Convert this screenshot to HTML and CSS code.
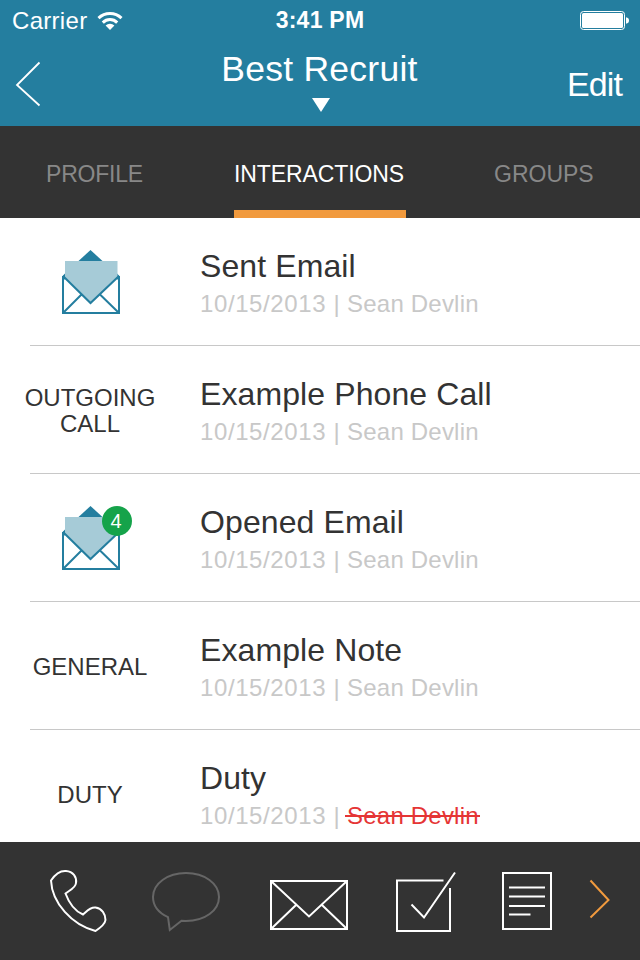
FILE: index.html
```html
<!DOCTYPE html>
<html lang="en">
<head>
<meta charset="utf-8">
<title>Best Recruit</title>
<link rel="stylesheet" href="styles.css">
</head>
<body>
<svg class="defs" width="0" height="0" aria-hidden="true">
  <symbol id="open-mail" viewBox="0 0 60 66">
    <path d="M29.500 1 41.500 12H17.500z" fill="#247e9f"/>
    <path d="M1 27.500 4 24.500V31zM59 27.500 56 24.500V31z" fill="#247e9f"/>
    <path d="M4 12H56.500V29L29.500 54 4 29z" fill="#a6cbd7"/>
    <path d="M2 27V64H58V27M2 27 29.500 54 58 27M2 64 20.500 45.500M58 64 39 45.500" fill="none" stroke="#247e9f" stroke-width="2"/>
  </symbol>
</svg>
<div class="screen">
  <header class="header">
    <div class="status">
      <div class="carrier"><span>Carrier</span>
        <svg width="26" height="20" viewBox="0 0 26 20" fill="none" stroke="#fff" stroke-width="3"><path d="M1.5 7.2A16.5 16.5 0 0 1 24.5 7.2M5.8 11.6A10.2 10.2 0 0 1 20.2 11.6"/><path d="M13 19 8.6 14.6A6.3 6.3 0 0 1 17.4 14.6z" fill="#fff" stroke="none"/></svg>
      </div>
      <div class="time">3:41 PM</div>
      <svg class="battery" width="50" height="20" viewBox="0 0 50 20"><rect x=".5" y=".5" width="44" height="18" rx="3" fill="none" stroke="#fff"/><rect x="2" y="2" width="41" height="15" rx="1.5" fill="#fff"/><path d="M46 6.2Q49 6.8 49 9.5T46 12.8z" fill="#fff"/></svg>
    </div>
    <div class="nav">
      <svg class="back" width="26" height="46" viewBox="0 0 26 46"><path d="M24.500 1.500 2 24 24.500 44.500" fill="none" stroke="#fff" stroke-width="1.8"/></svg>
      <div class="heading"><h1>Best Recruit</h1><svg class="caret" width="18" height="14" viewBox="0 0 18 14"><path d="M0 0H18L9 14z" fill="#fff"/></svg></div>
      <div class="edit">Edit</div>
    </div>
  </header>
  <nav class="tabs">
    <div class="tab profile">PROFILE</div>
    <div class="tab active">INTERACTIONS</div>
    <div class="tab groups">GROUPS</div>
  </nav>
  <main class="list">
    <section class="row">
      <div class="kind"><svg class="mail" width="60" height="66"><use href="#open-mail"/></svg></div>
      <div class="info"><h2>Sent Email</h2><p><span class="date">10/15/2013 |</span> Sean Devlin</p></div>
    </section>
    <section class="row">
      <div class="kind"><span>OUTGOING<br>CALL</span></div>
      <div class="info"><h2>Example Phone Call</h2><p><span class="date">10/15/2013 |</span> Sean Devlin</p></div>
    </section>
    <section class="row">
      <div class="kind"><svg class="mail" width="60" height="66"><use href="#open-mail"/></svg><b class="badge">4</b></div>
      <div class="info"><h2>Opened Email</h2><p><span class="date">10/15/2013 |</span> Sean Devlin</p></div>
    </section>
    <section class="row">
      <div class="kind"><span>GENERAL</span></div>
      <div class="info"><h2>Example Note</h2><p><span class="date">10/15/2013 |</span> Sean Devlin</p></div>
    </section>
    <section class="row">
      <div class="kind"><span>DUTY</span></div>
      <div class="info"><h2>Duty</h2><p><span class="date">10/15/2013 |</span> <span class="removed">Sean Devlin</span></p></div>
    </section>
  </main>
  <footer class="toolbar">
    <svg width="60" height="66" viewBox="48 868 60 66"><path d="M51 880.500C55 874.500 60 870.500 66 871C73 871.500 77 877 76 883C75.500 888 70 890 65.500 893.500C69 903 74.500 911 83 914.500C87 911 90 907 95.500 907.500C102 908.500 105.500 914 105.500 920C105 924.500 100 928 95.500 931C72 925 52 903 51 880.500Z"/></svg>
    <svg class="chat" width="70" height="64" viewBox="150 870 70 64"><path d="M168 917.200C158 912.500 153 905.500 153 897C153 883.500 167.500 873 186 873S219 883.500 219 897S205 921 186 921L181.500 920.700L169.800 930Z"/></svg>
    <svg class="envelope" width="80" height="52" viewBox="269 879 80 52"><path d="M271 881H347V929H271ZM271 881 309 916.500 347 881M271 929 296.300 904.700M347 929 321.700 904.700"/></svg>
    <svg class="task" width="64" height="64" viewBox="394 870 64 64"><path d="M443.500 880.500H397V931H450V888M411.500 904.500 424 917.500 455 872.500"/></svg>
    <svg class="note" width="52" height="60" viewBox="501 871 52 60"><path d="M503 873H551V929H503ZM509 887.500H545M509 896.500H545M509 906H545M509 914.500H530.500"/></svg>
    <svg class="more" width="24" height="44" viewBox="588 878 24 44"><path d="M590.500 880.500 608.500 900 590.500 917.500"/></svg>
  </footer>
</div>
</body>
</html>
```
FILE: styles.css
```css
* { box-sizing: border-box; }
body { margin: 0; background: #fff; font-family: "Liberation Sans", Arial, sans-serif; }
h1, h2, p { margin: 0; font-weight: 400; }
svg { display: block; flex: none; }
.defs { display: none; }
.screen { width: 640px; height: 960px; display: flex; flex-direction: column; overflow: hidden; }

.header { height: 126px; flex: none; background: #247e9f; color: #fff; }
.status { height: 40px; padding: 0 10px 0 12px; display: grid; grid-template-columns: 1fr auto 1fr; align-items: center; line-height: 41px; }
.carrier { display: flex; align-items: center; gap: 10px; font-size: 24px; letter-spacing: .3px; }
.time { font-size: 23px; font-weight: 700; letter-spacing: .25px; margin-left: -2px; }
.battery { justify-self: end; }
.nav { height: 86px; padding: 0 18px 0 15px; display: grid; grid-template-columns: 1fr auto 1fr; }
.back { margin-top: 21px; }
.heading { display: flex; flex-direction: column; align-items: center; margin-left: 2px; }
h1 { font-size: 35.5px; line-height: 40px; margin: 9px 0; letter-spacing: .25px; }
.caret { margin-left: 2px; }
.edit { justify-self: end; font-size: 34px; line-height: 40px; margin-top: 24px; letter-spacing: -.9px; }

.tabs { height: 92px; flex: none; background: #333; display: flex; justify-content: space-between; padding: 0 46px; }
.tab { color: #888; font-size: 23px; line-height: 96px; height: 92px; white-space: nowrap; }
.active { color: #fff; width: 172px; border-bottom: 8px solid #f19a3e; letter-spacing: -.1px; }
.profile { width: 100px; letter-spacing: -.2px; }
.groups { width: 100px; }

.list { height: 624px; flex: none; overflow: hidden; }
.row { height: 128px; margin-left: 30px; border-bottom: 1px solid #c8c8c8; display: flex; }
.row:last-child { border-bottom: 0; }
.kind { position: relative; width: 140px; margin-left: -10px; flex: none; display: flex; align-items: center; justify-content: center; text-align: center; color: #333; font-size: 24px; line-height: 26px; padding-top: 2px; }
.mail { margin: -2px 0 0 2px; }
.badge { position: absolute; left: 82px; top: 32px; width: 30px; height: 30px; border-radius: 50%; background: #15a34a; color: #fff; font-size: 20px; font-weight: 400; line-height: 30px; padding-right: 2px; }
.info { padding: 28px 0 0 40px; }
h2 { color: #333; font-size: 32px; line-height: 40px; letter-spacing: .1px; }
p { margin-top: 2px; color: #c8c8c8; font-size: 24px; line-height: 32px; letter-spacing: .2px; white-space: nowrap; }
.date { letter-spacing: .6px; }
.removed { position: relative; color: #e53535; }
.removed::after { content: ""; position: absolute; left: -2px; right: -1px; top: 13px; height: 2px; background: #e53535; }

.toolbar { height: 118px; flex: none; background: #333; display: flex; align-items: flex-start; padding: 26px 0 0 48px; }
.toolbar svg { fill: none; stroke: #fff; stroke-width: 2; }
.toolbar .chat { stroke: #666; margin: 2px 0 0 42px; }
.toolbar .envelope { margin: 11px 0 0 49px; }
.toolbar .task { margin: 2px 0 0 45px; }
.toolbar .note { margin: 3px 0 0 43px; }
.toolbar .more { stroke: #f19a3e; margin: 10px 0 0 35px; }
```
